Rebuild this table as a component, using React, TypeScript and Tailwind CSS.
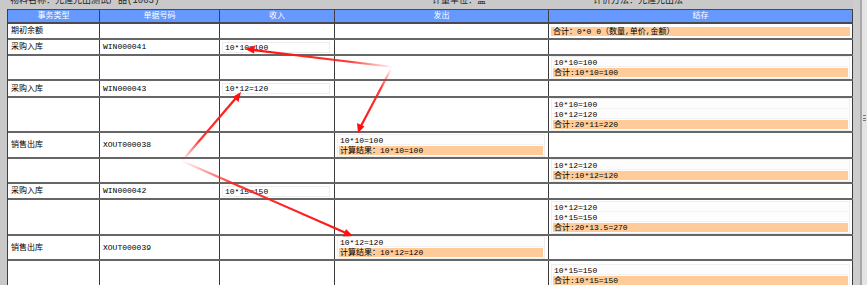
import React from 'react';

const colW = ['w-[92px]', 'w-[120px]', 'w-[115px]', 'w-[214px]', 'w-[304px]'];

type RowData = {
  h: string;
  cells: React.ReactNode[];
};

const Entry = ({ text }: { text: string }) => (
  <div className="ml-[2px] w-[108px] h-[11px] bg-white border border-[#ececec] flex items-center pl-[2px] leading-[9px]">
    {text}
  </div>
);

const Stack = ({ lines, total, wide }: { lines: string[]; total: string; wide?: boolean }) => (
  <div
    className={`${wide ? 'ml-[2px] w-[299px]' : 'ml-[2px] w-[208px]'} border border-[#efefef] bg-[#fdfdfd] px-[1px] py-[1px] flex flex-col gap-[1px]`}
  >
    {lines.map((l, i) => (
      <div key={i} className="h-[9px] leading-[9px] pl-[1px] border-b border-[#f2f2f2]">
        {l}
      </div>
    ))}
    <div className="h-[9px] leading-[9px] pl-[1px] bg-[#ffcc99]">{total}</div>
  </div>
);

const rows: RowData[] = [
  {
    h: 'h-[16px]',
    cells: [
      '期初余额',
      '',
      '',
      '',
      <div className="ml-[2px] w-[299px] h-[9px] leading-[9px] pl-[2px] bg-[#ffcc99]">合计：0*0 0（数量,单价,金额）</div>,
    ],
  },
  { h: 'h-[16px]', cells: ['采购入库', 'WIN000041', <Entry text="10*10=100" />, '', ''] },
  { h: 'h-[25px]', cells: ['', '', '', '', <Stack wide lines={['10*10=100']} total="合计:10*10=100" />] },
  { h: 'h-[17px]', cells: ['采购入库', 'WIN000043', <Entry text="10*12=120" />, '', ''] },
  {
    h: 'h-[35px]',
    cells: ['', '', '', '', <Stack wide lines={['10*10=100', '10*12=120']} total="合计:20*11=220" />],
  },
  {
    h: 'h-[26px]',
    cells: ['销售出库', 'XOUT000038', '', <Stack lines={['10*10=100']} total="计算结果：10*10=100" />, ''],
  },
  { h: 'h-[25px]', cells: ['', '', '', '', <Stack wide lines={['10*12=120']} total="合计:10*12=120" />] },
  { h: 'h-[16px]', cells: ['采购入库', 'WIN000042', <Entry text="10*15=150" />, '', ''] },
  {
    h: 'h-[36px]',
    cells: ['', '', '', '', <Stack wide lines={['10*12=120', '10*15=150']} total="合计:20*13.5=270" />],
  },
  {
    h: 'h-[25px]',
    cells: ['销售出库', 'XOUT000039', '', <Stack lines={['10*12=120']} total="计算结果：10*12=120" />, ''],
  },
  { h: 'h-[30px]', cells: ['', '', '', '', <Stack wide lines={['10*15=150']} total="合计:10*15=150" />] },
];

const Arrows = () => (
  <svg className="absolute left-0 top-0 pointer-events-none" width="867" height="285" viewBox="0 0 867 285">
    <defs>
      {[
        ['ga', 393, 67, 245, 49],
        ['gb', 391, 69, 358, 133],
        ['gc', 182, 161, 241, 92],
        ['gd', 182, 161, 353, 236],
      ].map(([id, x1, y1, x2, y2]) => (
        <linearGradient key={id as string} id={id as string} gradientUnits="userSpaceOnUse" x1={x1} y1={y1} x2={x2} y2={y2}>
          <stop offset="0" stopColor="#ff2020" stopOpacity="0" />
          <stop offset="0.3" stopColor="#ff2020" stopOpacity="0.9" />
          <stop offset="1" stopColor="#ff1010" stopOpacity="1" />
        </linearGradient>
      ))}
    </defs>
    <line x1="393" y1="67" x2="253" y2="50" stroke="url(#ga)" strokeWidth="2.2" />
    <polygon points="245,49 255,45.5 254,53.5" fill="#ff1010" />
    <line x1="391" y1="69" x2="361" y2="126" stroke="url(#gb)" strokeWidth="2.2" />
    <polygon points="358,133 357,123 364.5,126.5" fill="#ff1010" />
    <line x1="182" y1="161" x2="236" y2="98" stroke="url(#gc)" strokeWidth="2.2" />
    <polygon points="241,92 238.5,102 232.5,97" fill="#ff1010" />
    <line x1="182" y1="161" x2="346" y2="233" stroke="url(#gd)" strokeWidth="2.2" />
    <polygon points="353,236 343,236.5 346,229" fill="#ff1010" />
  </svg>
);

export default function App() {
  return (
    <div className="relative w-[867px] h-[285px] overflow-hidden bg-[#c9c9c9] text-[8px] text-black font-['Liberation_Mono','Noto_Sans_CJK_SC',monospace]">
      <div className="flex">
        <div className="w-[853px] shrink-0">
          {/* info strip, mostly scrolled away */}
          <div className="h-[9px] overflow-hidden flex text-[9px] leading-[11px] text-[#222]">
            <div className="-mt-[4px] pl-[10px] w-[432px] shrink-0">物料名称：先進先出测试产品(1003)</div>
            <div className="-mt-[4px] w-[161px] shrink-0">计量单位：盒</div>
            <div className="-mt-[4px]">计价方法：先進先出法</div>
          </div>
          <div className="flex">
            <div className="w-[7px] shrink-0" />
            <div className="w-[846px] border-l border-[#3f3f3f] bg-white">
              <div className="flex h-[15px] border-t border-b-2 border-[#4a4a4a] bg-[#6699ff] text-white">
                {['事务类型', '单据号码', '收入', '发出', '结存'].map((t, i) => (
                  <div key={t} className={`${colW[i]} shrink-0 border-r border-[#3f3f3f] flex items-center justify-center`}>
                    {t}
                  </div>
                ))}
              </div>
              {rows.map((r, ri) => (
                <div key={ri} className={`flex ${r.h} border-b-2 border-[#666]`}>
                  {r.cells.map((c, ci) => (
                    <div
                      key={ci}
                      className={`${colW[ci]} shrink-0 border-r border-[#3a3a3a] flex items-center ${typeof c === 'string' ? 'pl-[3px]' : ''}`}
                    >
                      {c}
                    </div>
                  ))}
                </div>
              ))}
            </div>
          </div>
        </div>
        {/* scrollbar area */}
        <div className="flex h-[285px]">
          <div className="w-[7px] bg-[#cdcdcd]" />
          <div className="w-[2px] bg-[#a8a8a8]" />
          <div className="w-[5px] bg-[#e4e4e4] flex flex-col">
            <div className="h-[115px]" />
            <div className="ml-[1px] w-[3px] h-[6px] flex flex-col justify-between">
              <div className="h-px bg-[#777]" />
              <div className="h-px bg-[#777]" />
              <div className="h-px bg-[#777]" />
            </div>
          </div>
        </div>
      </div>
      <Arrows />
    </div>
  );
}
